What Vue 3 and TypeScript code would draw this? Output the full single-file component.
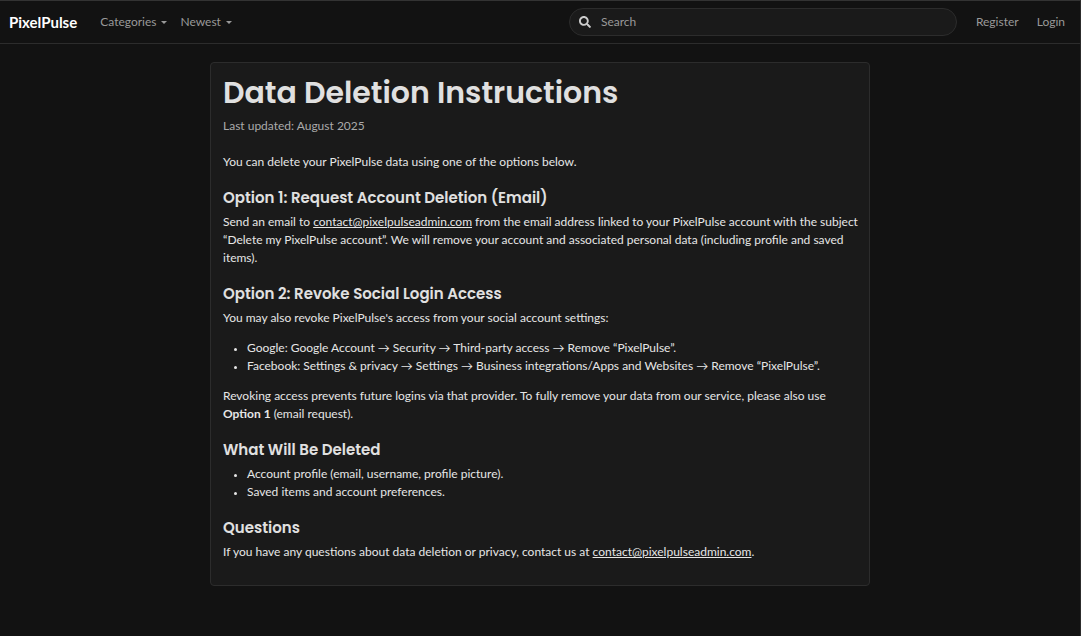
<script setup lang="ts">
import { ref } from 'vue'

const menus: string[] = ['Categories', 'Newest']
const email = 'contact@pixelpulseadmin.com'
const query = ref('')

const revokeSteps: string[] = [
  'Google: Google Account → Security → Third-party access → Remove “PixelPulse”.',
  'Facebook: Settings & privacy → Settings → Business integrations/Apps and Websites → Remove “PixelPulse”.',
]
const deletedItems: string[] = [
  'Account profile (email, username, profile picture).',
  'Saved items and account preferences.',
]
</script>

<template>
  <div class="page">
    <header class="navbar">
      <a class="brand" href="#">PixelPulse</a>
      <nav class="menus" aria-label="Browse">
        <button v-for="menu in menus" :key="menu" class="menu" type="button">
          {{ menu }}<span class="caret" aria-hidden="true"></span>
        </button>
      </nav>
      <form class="search" role="search" @submit.prevent>
        <svg class="search-icon" viewBox="0 0 512 512" aria-hidden="true">
          <path
            fill="currentColor"
            d="M505 442.700L405.300 343c-4.500-4.500-10.600-7-17-7H372c27.600-35.300 44-79.700 44-128C416 93.100 322.900 0 208 0S0 93.100 0 208s93.100 208 208 208c48.300 0 92.700-16.400 128-44v16.300c0 6.400 2.500 12.500 7 17l99.700 99.700c9.400 9.400 24.600 9.400 33.900 0l28.300-28.300c9.400-9.400 9.400-24.600.1-34zM208 336c-70.700 0-128-57.200-128-128 0-70.700 57.200-128 128-128 70.700 0 128 57.200 128 128 0 70.700-57.200 128-128 128z"
          />
        </svg>
        <input v-model="query" class="search-input" type="search" placeholder="Search" aria-label="Search" />
      </form>
      <nav class="account" aria-label="Account">
        <a class="account-link" href="#">Register</a>
        <a class="account-link" href="#">Login</a>
      </nav>
    </header>

    <main class="content">
      <article class="card">
        <h1>Data Deletion Instructions</h1>
        <p class="updated">Last updated: August 2025</p>
        <p>You can delete your PixelPulse data using one of the options below.</p>

        <h2>Option 1: Request Account Deletion (Email)</h2>
        <p>
          Send an email to <a :href="`mailto:${email}`">{{ email }}</a> from the email address linked to your
          PixelPulse account with the subject “Delete my PixelPulse account”. We will remove your account and
          associated personal data (including profile and saved items).
        </p>

        <h2>Option 2: Revoke Social Login Access</h2>
        <p>You may also revoke PixelPulse's access from your social account settings:</p>
        <ul>
          <li v-for="step in revokeSteps" :key="step">{{ step }}</li>
        </ul>
        <p>
          Revoking access prevents future logins via that provider. To fully remove your data from our service,
          please also use <strong>Option 1</strong> (email request).
        </p>

        <h2>What Will Be Deleted</h2>
        <ul>
          <li v-for="item in deletedItems" :key="item">{{ item }}</li>
        </ul>

        <h2>Questions</h2>
        <p>
          If you have any questions about data deletion or privacy, contact us at
          <a :href="`mailto:${email}`">{{ email }}</a>.
        </p>
      </article>
    </main>
  </div>
</template>

<style>
body {
  margin: 0;
  background: #121212;
}
</style>

<style scoped>
.page {
  box-sizing: border-box;
  min-height: 100vh;
  border-top: 1px solid #333;
  border-right: 1px solid #2c2c2c;
  background: #121212;
  color: #e6e6e6;
  font-family: Lato, "Liberation Sans", sans-serif;
  font-size: 12px;
  line-height: 18px;
}

.navbar {
  display: flex;
  align-items: center;
  padding: 6px 9px;
  border-bottom: 1px solid #2c2c2c;
}

.brand {
  margin-right: 12px;
  color: #fff;
  font-size: 15px;
  font-weight: 700;
  text-decoration: none;
}

.menus,
.account {
  display: flex;
}

.menus {
  flex: 1;
  padding-left: 4px;
}

.menu {
  display: flex;
  align-items: center;
  padding: 6px;
  margin: 0 0 0 1px;
  border: 0;
  background: none;
  color: #999;
  font: inherit;
  cursor: pointer;
}

.caret {
  margin-left: 5px;
  border-top: 3px solid currentColor;
  border-right: 3px solid transparent;
  border-left: 3px solid transparent;
}

.search {
  box-sizing: border-box;
  display: flex;
  flex: 0 1 388px;
  align-items: center;
  gap: 10px;
  height: 28px;
  padding: 0 9px;
  margin-right: 13px;
  border: 1px solid #2c2c2c;
  border-radius: 14px;
  background: #1a1a1a;
}

.search-icon {
  flex: none;
  width: 12px;
  height: 12px;
  color: #ccc;
}

.search-input {
  flex: 1;
  min-width: 0;
  padding: 0;
  border: 0;
  outline: 0;
  background: none;
  color: #e0e0e0;
  font: inherit;
}

.search-input::placeholder {
  color: #999;
  opacity: 1;
}

.account {
  gap: 6px;
}

.account-link {
  padding: 6px;
  color: #999;
  text-decoration: none;
}

.content {
  max-width: 660px;
  padding: 18px 12px;
  margin: 0 auto;
}

.card {
  padding: 12px 8px 12px 12px;
  border: 1px solid #2c2c2c;
  border-radius: 4px;
  background: #1a1a1a;
}

h1,
h2 {
  color: #e0e0e0;
  font-family: Poppins, Inter, sans-serif;
  font-weight: 600;
}

h1 {
  margin: 0 0 6px;
  font-size: 30px;
  line-height: 36px;
}

h2 {
  margin: 18px 0 6px;
  font-size: 15px;
  line-height: 18px;
}

p {
  margin: 0 0 12px;
}

.updated {
  margin-bottom: 18px;
  color: #aaa;
}

ul {
  padding-left: 24px;
  margin: 0 0 12px;
}

li::marker {
  font-size: 10px;
}

.card a {
  color: inherit;
  text-decoration: underline;
}
</style>
